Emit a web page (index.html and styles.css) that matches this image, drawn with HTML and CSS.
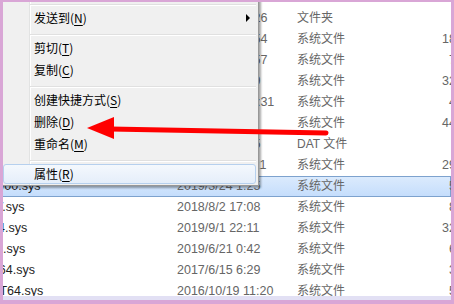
FILE: index.html
```html
<!DOCTYPE html>
<html>
<head>
<meta charset="utf-8">
<link rel="stylesheet" href="styles.css">
</head>
<body>
<div class="frame">
  <div class="list">
    <div class="rows">
      <div class="row"><span class="name">UMDF</span><span class="date">2019/3/19 13:23</span><span class="type">文件夹</span><span class="size"></span></div>
      <div class="row"><span class="name">zh-CN</span><span class="date">2019/12/7 20:26</span><span class="type">文件夹</span><span class="size"></span></div>
      <div class="row"><span class="name">1394ohci.sys</span><span class="date">2018/4/12 10:54</span><span class="type">系统文件</span><span class="size">184 KB</span></div>
      <div class="row"><span class="name">3ware.sys</span><span class="date">2019/6/21 21:57</span><span class="type">系统文件</span><span class="size">72 KB</span></div>
      <div class="row"><span class="name">ACPI.sys</span><span class="date">2019/9/4 13:19</span><span class="type">系统文件</span><span class="size">329 KB</span></div>
      <div class="row"><span class="name">AcpiDev.sys</span><span class="date">2019/10/15 19:31</span><span class="type">系统文件</span><span class="size">45 KB</span></div>
      <div class="row"><span class="name">acpiex.sys</span><span class="date">2019/6/5 0:45</span><span class="type">系统文件</span><span class="size">441 KB</span></div>
      <div class="row"><span class="name">acpitime.dat</span><span class="date">2018/4/12 9:15</span><span class="type">DAT 文件</span><span class="size">1 KB</span></div>
      <div class="row"><span class="name">AgileVpn.sys</span><span class="date">2019/12/9 11:21</span><span class="type">系统文件</span><span class="size">295 KB</span></div>
      <div class="row selected"><span class="name">NETwew00.sys</span><span class="date">2019/3/24 1:25</span><span class="type">系统文件</span><span class="size">53 KB</span></div>
      <div class="row"><span class="name">iaStorAV.sys</span><span class="date">2018/8/2 17:08</span><span class="type">系统文件</span><span class="size">84 KB</span></div>
      <div class="row"><span class="name">hwinfo64.sys</span><span class="date">2019/9/1 22:11</span><span class="type">系统文件</span><span class="size">321 KB</span></div>
      <div class="row"><span class="name">nvstor64.sys</span><span class="date">2019/6/21 0:42</span><span class="type">系统文件</span><span class="size">63 KB</span></div>
      <div class="row"><span class="name">AsUpIO64.sys</span><span class="date">2017/6/15 6:29</span><span class="type">系统文件</span><span class="size">31 KB</span></div>
      <div class="row"><span class="name">AsIOLibT64.sys</span><span class="date">2016/10/19 11:20</span><span class="type">系统文件</span><span class="size">57 KB</span></div>
    </div>
  </div>

  <div class="menu">
    <div class="sep"></div>
    <div class="item has-sub"><span>发送到(<u>N</u>)</span><span class="sub-arrow"></span></div>
    <div class="sep"></div>
    <div class="item">剪切(<u>T</u>)</div>
    <div class="item">复制(<u>C</u>)</div>
    <div class="sep"></div>
    <div class="item">创建快捷方式(<u>S</u>)</div>
    <div class="item">删除(<u>D</u>)</div>
    <div class="item">重命名(<u>M</u>)</div>
    <div class="sep"></div>
    <div class="item hover">属性(<u>R</u>)</div>
  </div>
</div>

<svg class="arrow" width="454" height="304" viewBox="0 0 454 304">
  <line x1="110" y1="129" x2="326" y2="133" stroke="#ff0000" stroke-width="5" stroke-linecap="round"/>
  <polygon points="87,128 114,117 114,139" fill="#ff0000"/>
</svg>
</body>
</html>
```

FILE: styles.css
```css
html, body {
  margin: 0;
  padding: 0;
}

body {
  position: relative;
  width: 454px;
  height: 304px;
  overflow: hidden;
  background: #ffffff;
  font-family: "Noto Sans CJK SC", "Noto Sans", sans-serif;
  font-size: 12px;
}

.frame {
  position: relative;
  box-sizing: border-box;
  width: 454px;
  height: 304px;
  border-style: solid;
  border-color: #d9a6d6;
  border-width: 2px 3px 4px 3px;
  overflow: hidden;
  background: #ffffff;
}

/* file list (details view, scrolled) */
.list {
  height: 294px;
  border-bottom: 4px solid #e2e0f4;
  overflow: hidden;
  font-family: "Liberation Sans", "Noto Sans CJK SC", sans-serif;
  font-size: 12.5px;
}

.rows {
  margin-top: -15px;
  margin-left: -48px;
}

.row {
  display: grid;
  grid-template-columns: 222px 120px 100px 86px;
  height: 21px;
  line-height: 21px;
  color: #666666;
  white-space: nowrap;
}

.row > span {
  overflow: hidden;
}

.row .name {
  color: #1e1e1e;
}

.row .type {
  font-size: 12px;
}

.row .size {
  text-align: right;
}

.row.selected {
  background: linear-gradient(#dcebfd, #c4ddfc);
  box-shadow: inset 0 0 0 1px #7da2ce;
}

/* context menu */
.menu {
  position: absolute;
  left: -3px;
  top: -4px;
  width: 259px;
  box-sizing: border-box;
  padding: 0 2px;
  border: 1px solid #979797;
  background:
    linear-gradient(to right, transparent 28px, #e2e3e3 28px, #e2e3e3 29px, #ffffff 29px, #ffffff 30px, transparent 30px),
    #f0f0f0;
  box-shadow: 2px 2px 2px rgba(0, 0, 0, 0.35);
  color: #000000;
}

.sep {
  box-sizing: border-box;
  height: 8px;
  padding: 5px 0 0 27px;
}

.sep::before {
  content: "";
  display: block;
  height: 1px;
  background: #e0e0e0;
  border-bottom: 1px solid #ffffff;
}

.item {
  box-sizing: border-box;
  height: 22px;
  line-height: 22px;
  padding-left: 31px;
  white-space: nowrap;
}

.item u {
  text-decoration-thickness: 1px;
  text-underline-offset: 2px;
}

.item.has-sub {
  display: flex;
  align-items: center;
  justify-content: space-between;
  padding-right: 6px;
}

.sub-arrow {
  width: 0;
  height: 0;
  border-left: 4px solid #000000;
  border-top: 4px solid transparent;
  border-bottom: 4px solid transparent;
}

.item.hover {
  height: 20px;
  line-height: 18px;
  margin: 1px 0;
  padding-left: 30px;
  border: 1px solid #b6d0ee;
  border-radius: 3px;
  background: linear-gradient(#f4f8fd, #e5eefa);
}

.arrow {
  position: absolute;
  left: 0;
  top: 0;
  pointer-events: none;
}
```
